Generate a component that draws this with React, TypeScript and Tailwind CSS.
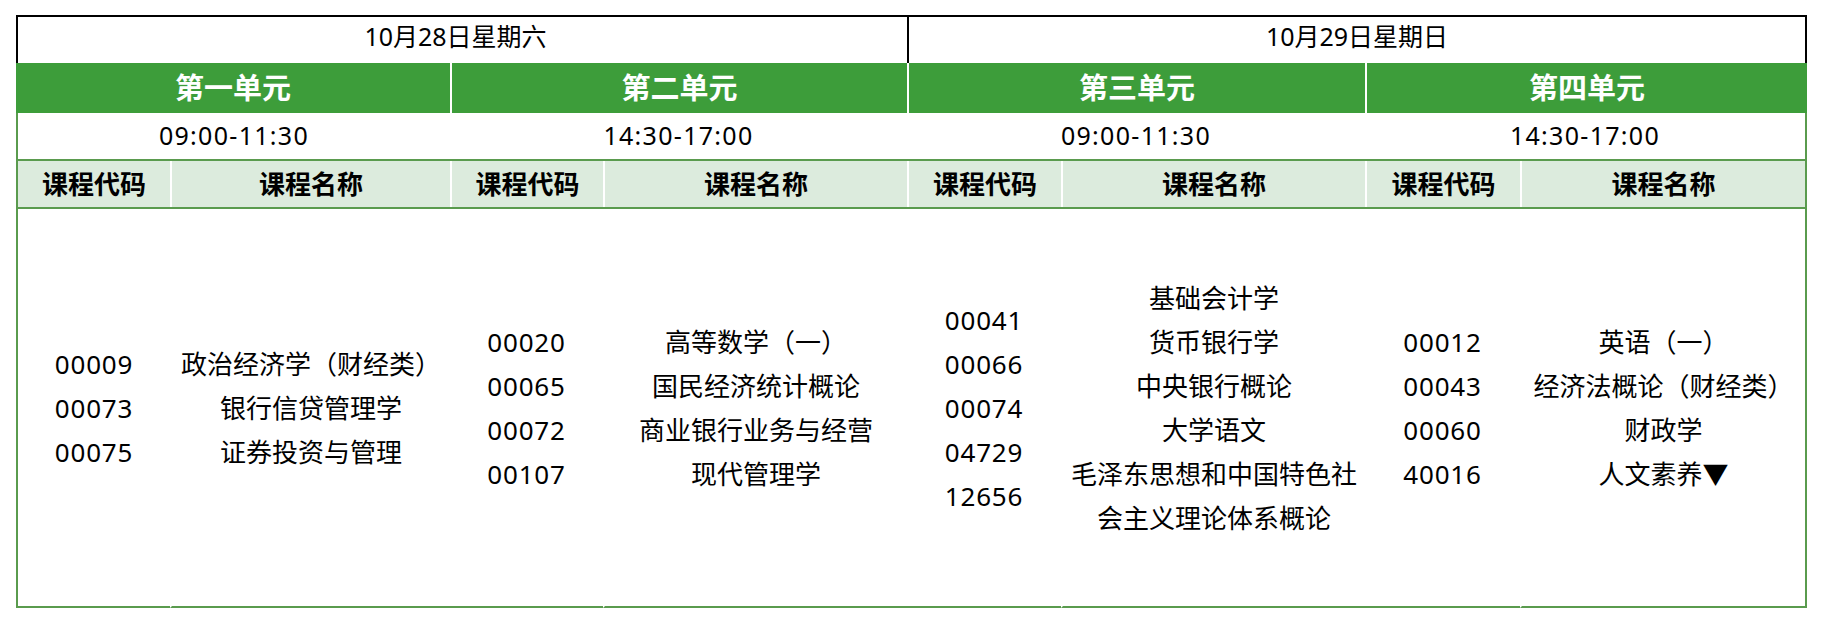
const units = [
  {
    title: '第一单元',
    time: '09:00-11:30',
    width: 'w-[434px]',
    codeW: 'w-[154px]',
    nameW: 'w-[280px]',
    codes: ['00009', '00073', '00075'],
    names: ['政治经济学（财经类）', '银行信贷管理学', '证券投资与管理'],
  },
  {
    title: '第二单元',
    time: '14:30-17:00',
    width: 'w-[457px]',
    codeW: 'w-[153px]',
    nameW: 'w-[304px]',
    codes: ['00020', '00065', '00072', '00107'],
    names: ['高等数学（一）', '国民经济统计概论', '商业银行业务与经营', '现代管理学'],
  },
  {
    title: '第三单元',
    time: '09:00-11:30',
    width: 'w-[458px]',
    codeW: 'w-[154px]',
    nameW: 'w-[304px]',
    codes: ['00041', '00066', '00074', '04729', '12656'],
    names: ['基础会计学', '货币银行学', '中央银行概论', '大学语文', '毛泽东思想和中国特色社', '会主义理论体系概论'],
  },
  {
    title: '第四单元',
    time: '14:30-17:00',
    width: 'w-[442px]',
    codeW: 'w-[155px]',
    nameW: 'w-[287px]',
    codes: ['00012', '00043', '00060', '40016'],
    names: ['英语（一）', '经济法概论（财经类）', '财政学', '人文素养▼'],
  },
];

export default function App() {
  return (
    <div className="min-h-[624px] bg-white pl-[16px] pt-[15px] font-['Noto_Sans','Noto_Sans_CJK_SC',sans-serif] text-black">
      <div className="w-[1791px]">
        {/* date row */}
        <div className="flex h-[48px] text-[25px]">
          <div className="flex w-[891px] items-center justify-center border-l-2 border-t-2 border-black pb-[6px] pr-[14px]">
            10月28日星期六
          </div>
          <div className="flex w-[900px] items-center justify-center border-x-2 border-t-2 border-black pb-[6px]">
            10月29日星期日
          </div>
        </div>

        {/* unit titles */}
        <div className="flex h-[50px] bg-[#3d9d3a] text-[29px] font-bold text-white">
          {units.map((u, i) => (
            <div
              key={u.title}
              className={`flex ${u.width} items-center justify-center ${i > 0 ? 'border-l-2 border-white' : ''}`}
            >
              {u.title}
            </div>
          ))}
        </div>

        {/* times */}
        <div className="flex h-[46px] border-x-2 border-[#5a9b4e] text-[25px] tracking-[1.3px]">
          {units.map((u, i) => (
            <div
              key={u.title}
              className={`flex items-center justify-center ${i === 0 ? 'w-[432px]' : i === 3 ? 'w-[440px]' : u.width}`}
            >
              {u.time}
            </div>
          ))}
        </div>

        {/* column headers */}
        <div className="flex h-[50px] border-y-2 border-[#5a9b4e] bg-[#dcebdd] text-[26px] font-bold">
          {units.map((u, i) => (
            <div key={u.title} className="flex">
              <div
                className={`flex ${u.codeW} items-center justify-center border-l-2 ${i === 0 ? 'border-[#5a9b4e]' : 'border-white'}`}
              >
                课程代码
              </div>
              <div
                className={`flex ${u.nameW} items-center justify-center border-l-2 border-white ${i === 3 ? 'border-r-2 border-r-[#5a9b4e]' : ''}`}
              >
                课程名称
              </div>
            </div>
          ))}
        </div>

        {/* courses */}
        <div className="flex h-[399px] text-[26px] leading-[44px]">
          {units.map((u, i) => (
            <div key={u.title} className="flex">
              <div
                className={`flex ${u.codeW} flex-col items-center justify-center border-b-2 border-[#5a9b4e] tracking-[0.8px] ${i === 0 ? 'border-l-2' : ''}`}
              >
                {u.codes.map((c) => (
                  <div key={c}>{c}</div>
                ))}
              </div>
              <div
                className={`flex ${u.nameW} flex-col items-center justify-center border-b-2 border-l-2 border-[#5a9b4e] border-l-white ${i === 3 ? 'border-r-2' : ''}`}
              >
                {u.names.map((n) => (
                  <div key={n} className="whitespace-nowrap">
                    {n}
                  </div>
                ))}
              </div>
            </div>
          ))}
        </div>
      </div>
    </div>
  );
}
